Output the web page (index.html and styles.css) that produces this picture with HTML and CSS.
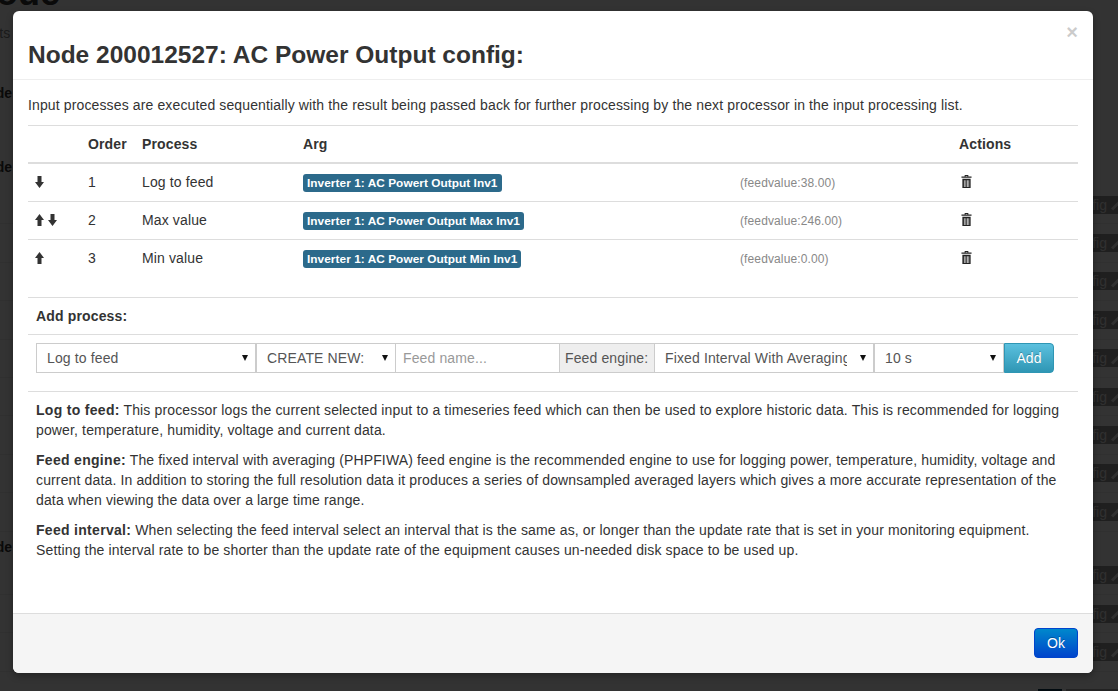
FILE: index.html
```html
<!DOCTYPE html>
<html lang="en">
<head>
    <meta charset="UTF-8">
    <title>Node config</title>
    <link rel="stylesheet" href="styles.css">
</head>
<body>
    <!-- Page behind the backdrop -->
    <div class="page">
        <h1 class="page-title">Node</h1>
        <p class="page-sub">Inputs</p>
        <div class="page-node">Node</div>
        <div class="page-node">Node</div>
        <div class="page-rows page-rows-first">
            <div class="page-row"><span class="page-btn">Config <i class="pencil"></i></span></div>
            <div class="page-row"><span class="page-btn">Config <i class="pencil"></i></span></div>
            <div class="page-row"><span class="page-btn">Config <i class="pencil"></i></span></div>
            <div class="page-row"><span class="page-btn">Config <i class="pencil"></i></span></div>
            <div class="page-row"><span class="page-btn">Config <i class="pencil"></i></span></div>
            <div class="page-row"><span class="page-btn">Config <i class="pencil"></i></span></div>
            <div class="page-row"><span class="page-btn">Config <i class="pencil"></i></span></div>
            <div class="page-row"><span class="page-btn">Config <i class="pencil"></i></span></div>
            <div class="page-row"><span class="page-btn">Config <i class="pencil"></i></span></div>
        </div>
        <div class="page-node page-node-last">Node</div>
        <div class="page-rows">
            <div class="page-row"><span class="page-btn">Config <i class="pencil"></i></span></div>
            <div class="page-row"><span class="page-btn">Config <i class="pencil"></i></span></div>
            <div class="page-row"><span class="page-btn">Config <i class="pencil"></i></span></div>
        </div>
        <div class="page-actions">
            <span class="page-save"></span>
            <span class="page-more"></span>
        </div>
    </div>
    <div class="backdrop"></div>

    <div class="modal">
        <div class="modal-header">
            <button class="close" type="button">×</button>
            <h3>Node 200012527: AC Power Output config:</h3>
        </div>

        <div class="modal-body">
            <p class="intro">Input processes are executed sequentially with the result being passed back for further processing by the next processor in the input processing list.</p>

            <table class="process-table">
                <thead>
                    <tr>
                        <th class="col-move"></th>
                        <th class="col-order">Order</th>
                        <th class="col-process">Process</th>
                        <th class="col-arg">Arg</th>
                        <th class="col-value"></th>
                        <th>Actions</th>
                    </tr>
                </thead>
                <tbody>
                    <tr>
                        <td><svg class="arrow" viewBox="0 0 9 12"><path d="M2.5 0h4v6H9l-4.500 6L0 6h2.500z"/></svg></td>
                        <td>1</td>
                        <td>Log to feed</td>
                        <td><span class="label">Inverter 1: AC Powert Output Inv1</span></td>
                        <td class="feedvalue">(feedvalue:38.00)</td>
                        <td><svg class="trash" viewBox="0 0 12 14"><path d="M4 0h4v1.500h3.500V3H.5V1.500H4zM5 1v.5h2V1zM1.500 4h9v10h-9zM3.200 5.500V13h.7V5.500zM5 5.500V13h.7V5.500zM6.600 5.500V13h.7V5.500zM8.200 5.500V13h.7V5.500z" fill-rule="evenodd"/></svg></td>
                    </tr>
                    <tr>
                        <td>
                            <svg class="arrow arrow-first" viewBox="0 0 9 12"><path d="M2.5 12h4V6H9L4.500 0 0 6h2.500z"/></svg>
                            <svg class="arrow" viewBox="0 0 9 12"><path d="M2.5 0h4v6H9l-4.500 6L0 6h2.500z"/></svg>
                        </td>
                        <td>2</td>
                        <td>Max value</td>
                        <td><span class="label">Inverter 1: AC Power Output Max Inv1</span></td>
                        <td class="feedvalue">(feedvalue:246.00)</td>
                        <td><svg class="trash" viewBox="0 0 12 14"><path d="M4 0h4v1.500h3.500V3H.5V1.500H4zM5 1v.5h2V1zM1.500 4h9v10h-9zM3.200 5.500V13h.7V5.500zM5 5.500V13h.7V5.500zM6.600 5.500V13h.7V5.500zM8.200 5.500V13h.7V5.500z" fill-rule="evenodd"/></svg></td>
                    </tr>
                    <tr>
                        <td><svg class="arrow" viewBox="0 0 9 12"><path d="M2.5 12h4V6H9L4.500 0 0 6h2.500z"/></svg></td>
                        <td>3</td>
                        <td>Min value</td>
                        <td><span class="label">Inverter 1: AC Power Output Min Inv1</span></td>
                        <td class="feedvalue">(feedvalue:0.00)</td>
                        <td><svg class="trash" viewBox="0 0 12 14"><path d="M4 0h4v1.500h3.500V3H.5V1.500H4zM5 1v.5h2V1zM1.500 4h9v10h-9zM3.200 5.500V13h.7V5.500zM5 5.500V13h.7V5.500zM6.600 5.500V13h.7V5.500zM8.200 5.500V13h.7V5.500z" fill-rule="evenodd"/></svg></td>
                    </tr>
                </tbody>
            </table>

            <div class="add-title"><b>Add process:</b></div>

            <div class="add-row">
                <div class="input-append">
                    <div class="select sel-process"><span>Log to feed</span><i class="caret"></i></div>
                    <div class="select sel-new"><span>CREATE NEW:</span><i class="caret"></i></div>
                    <div class="text-input">Feed name...</div>
                    <div class="add-on">Feed engine:</div>
                    <div class="select sel-engine"><span>Fixed Interval With Averaging (PHPFIWA)</span><i class="caret"></i></div>
                    <div class="select sel-interval"><span>10 s</span><i class="caret"></i></div>
                    <button class="btn-add" type="button">Add</button>
                </div>
            </div>

            <div class="help">
                <p><b>Log to feed:</b> This processor logs the current selected input to a timeseries feed which can then be used to explore historic data. This is recommended for logging power, temperature, humidity, voltage and current data.</p>
                <p><b>Feed engine:</b> The fixed interval with averaging (PHPFIWA) feed engine is the recommended engine to use for logging power, temperature, humidity, voltage and current data. In addition to storing the full resolution data it produces a series of downsampled averaged layers which gives a more accurate representation of the data when viewing the data over a large time range.</p>
                <p><b>Feed interval:</b> When selecting the feed interval select an interval that is the same as, or longer than the update rate that is set in your monitoring equipment. Setting the interval rate to be shorter than the update rate of the equipment causes un-needed disk space to be used up.</p>
            </div>
        </div>

        <div class="modal-footer">
            <button class="btn-ok" type="button">Ok</button>
        </div>
    </div>
</body>
</html>
```

FILE: styles.css
```css
* {
    box-sizing: border-box;
}

html, body {
    height: 100%;
}

body {
    margin: 0;
    overflow: hidden;
    background-color: #fff;
    color: #333;
    font-family: "Liberation Sans", Arial, sans-serif;
    font-size: 14px;
    line-height: 20px;
}

/* Page behind the backdrop */
.page {
    height: 100%;
    overflow: hidden;
}

.page-title {
    margin: -27px 0 0 -30px;
    font-size: 36px;
    line-height: 40px;
}

.page-sub {
    margin: 10px 0 0 -28px;
    color: #888;
}

.page-node {
    margin-top: 40px;
    margin-left: -23px;
    font-weight: bold;
    height: 20px;
}

.page-node + .page-node {
    margin-top: 54px;
}

.page-rows-first {
    margin-top: 9px;
}

.page-node-last {
    margin-top: 5px;
}

.page-row {
    display: flex;
    justify-content: flex-end;
    align-items: center;
    height: 38.4px;
    border-bottom: 1px solid #eee;
}

.page-btn {
    display: flex;
    align-items: center;
    gap: 3px;
    height: 18px;
    padding-left: 10px;
    margin-right: -6px;
    background-color: #999;
    color: #eee;
    font-size: 14px;
    line-height: 18px;
}

.pencil {
    display: block;
    width: 14px;
    height: 3px;
    background-color: #eee;
    transform: rotate(-45deg);
}

.page-actions {
    display: flex;
    justify-content: flex-end;
    gap: 4px;
    margin-top: 17px;
}

.page-save {
    width: 24px;
    height: 20px;
    background-color: #08364a;
}

.page-more {
    width: 60px;
    height: 20px;
    margin-right: -8px;
    background-color: #aaa;
}

.backdrop {
    position: absolute;
    inset: 0;
    background-color: #000;
    opacity: 0.8;
}

/* Modal */
.modal {
    position: absolute;
    left: 13px;
    top: 11px;
    width: 1080px;
    height: 662px;
    display: flex;
    flex-direction: column;
    background-color: #fff;
    border-radius: 6px;
    box-shadow: 0 3px 7px rgba(0, 0, 0, 0.3);
}

.modal-header {
    height: 69px;
    padding: 17px 15px 0;
    border-bottom: 1px solid #eee;
}

.modal-header h3 {
    margin: 0;
    font-size: 24.5px;
    line-height: 54px;
    color: #333;
}

.close {
    float: right;
    margin: 1px 0 0;
    padding: 0;
    border: 0;
    background: none;
    color: #000;
    opacity: 0.2;
    font-family: inherit;
    font-size: 20px;
    font-weight: bold;
    line-height: 7px;
    height: 7px;
}

.modal-body {
    flex: 1;
    padding: 15px 15px 0;
    letter-spacing: 0.13px;
}

.intro {
    margin: 0 0 9px;
    height: 21px;
}

/* Process table */
.process-table {
    width: 100%;
    border-collapse: collapse;
    table-layout: fixed;
}

.process-table th,
.process-table td {
    padding: 8px 8px 0;
    text-align: left;
    vertical-align: top;
    border-top: 1px solid #ddd;
    height: 38px;
}

.process-table th {
    height: 37px;
    border-bottom: 2px solid #ddd;
}

.process-table tbody tr:first-child td {
    height: 39px;
    border-top: 0;
}

.col-move {
    width: 52px;
}

.col-order {
    width: 54px;
}

.col-process {
    width: 161px;
}

.col-arg {
    width: 437px;
}

.col-value {
    width: 219px;
}

.arrow {
    display: inline-block;
    width: 9px;
    height: 12px;
    margin: 4px 0 0 -1px;
    vertical-align: top;
    fill: #333;
}

.arrow-first {
    margin-right: 1px;
}

.trash {
    display: inline-block;
    width: 11px;
    height: 13px;
    margin: 3px 0 0 2px;
    vertical-align: top;
    fill: #222;
}

.label {
    display: block;
    width: fit-content;
    margin-top: 2px;
    padding: 2px 4px;
    border-radius: 3px;
    background-color: #2c6a8b;
    color: #fff;
    font-size: 11.844px;
    font-weight: bold;
    line-height: 14px;
    letter-spacing: 0.05px;
    white-space: nowrap;
}

.process-table .feedvalue {
    padding-top: 9px;
    color: #888;
    font-size: 12px;
    letter-spacing: 0.12px;
}

.add-title {
    margin-top: 19px;
    padding: 8px;
    height: 38px;
    border-top: 1px solid #ddd;
    border-bottom: 1px solid #ddd;
    letter-spacing: 0.15px;
}

.add-row {
    height: 57px;
    padding: 8px;
    border-bottom: 1px solid #ddd;
}

.input-append {
    display: flex;
    height: 30px;
    font-size: 14px;
}

.select {
    position: relative;
    height: 30px;
    padding: 0 10px;
    border: 1px solid #ccc;
    background-color: #fff;
    color: #555;
    line-height: 28px;
    overflow: hidden;
    white-space: nowrap;
}

.select span {
    display: block;
    overflow: hidden;
}

.caret {
    position: absolute;
    right: 7px;
    top: 11px;
    width: 0;
    height: 0;
    border-left: 3px solid transparent;
    border-right: 3px solid transparent;
    border-top: 6px solid #111;
}

.sel-process {
    width: 220px;
}

.sel-new {
    width: 140px;
}

.sel-engine {
    width: 220px;
}

.sel-engine span {
    width: 182px;
}

.sel-interval {
    width: 130px;
}

.text-input {
    width: 164px;
    height: 30px;
    padding: 0 7px;
    border: 1px solid #ccc;
    border-left: 0;
    background-color: #fff;
    color: #999;
    line-height: 28px;
}

.add-on {
    width: 94px;
    height: 30px;
    padding: 0 5px;
    border: 1px solid #ccc;
    border-width: 1px 0;
    background-color: #eee;
    color: #555;
    line-height: 28px;
    white-space: nowrap;
}

.btn-add {
    width: 50px;
    height: 30px;
    padding: 0;
    border: 1px solid #2f96b4;
    border-radius: 0 4px 4px 0;
    background-color: #49afcd;
    background-image: linear-gradient(to bottom, #5bc0de, #2f96b4);
    color: #fff;
    font-family: inherit;
    font-size: 14px;
    text-shadow: 0 -1px 0 rgba(0, 0, 0, 0.25);
}

.help {
    padding: 8px 8px 0;
    letter-spacing: 0.14px;
}

.help p {
    margin: 0 0 10px;
}

.help b {
    letter-spacing: 0.3px;
}

/* Footer */
.modal-footer {
    display: flex;
    justify-content: flex-end;
    height: 60px;
    padding: 14px 15px;
    border-top: 1px solid #ddd;
    border-radius: 0 0 6px 6px;
    background-color: #f5f5f5;
}

.btn-ok {
    width: 44px;
    height: 30px;
    padding: 0;
    border: 1px solid #04c;
    border-radius: 4px;
    background-color: #06c;
    background-image: linear-gradient(to bottom, #08c, #04c);
    color: #fff;
    font-family: inherit;
    font-size: 14px;
    text-shadow: 0 -1px 0 rgba(0, 0, 0, 0.25);
}
```
